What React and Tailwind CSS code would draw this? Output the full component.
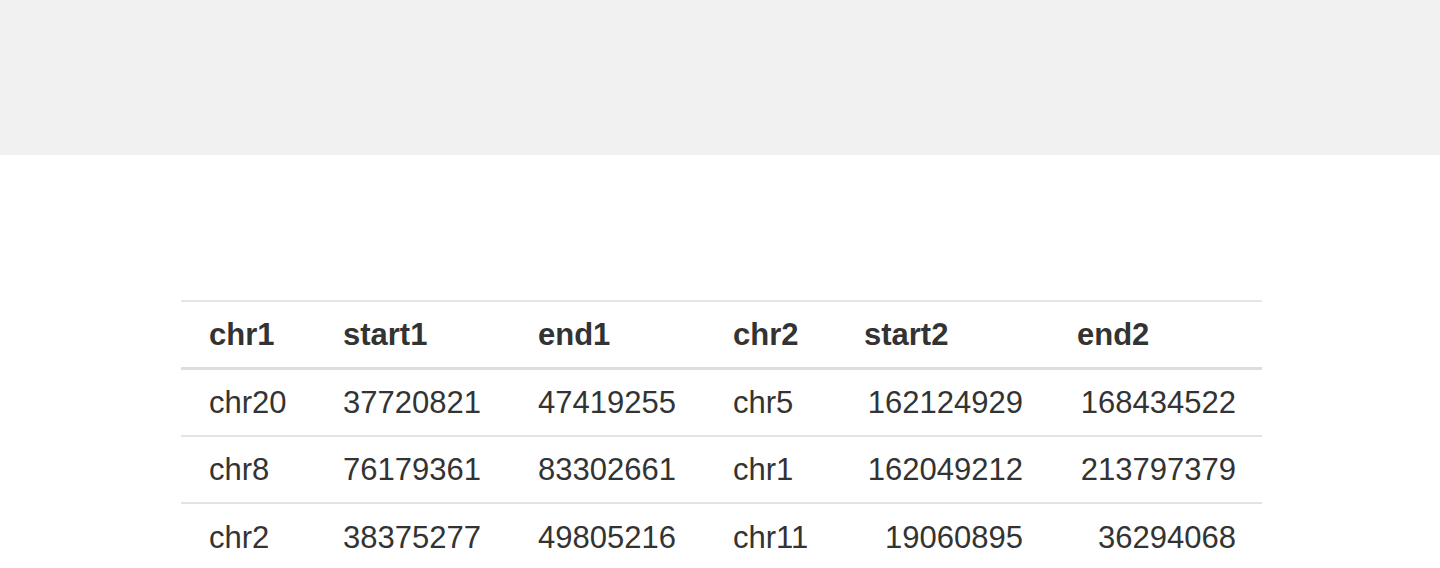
const columns = [
  { key: "chr1", label: "chr1", width: "w-[134px]", align: "text-left" },
  { key: "start1", label: "start1", width: "w-[195px]", align: "text-left" },
  { key: "end1", label: "end1", width: "w-[195px]", align: "text-left" },
  { key: "chr2", label: "chr2", width: "w-[131px]", align: "text-left" },
  { key: "start2", label: "start2", width: "w-[213px]", align: "text-right" },
  { key: "end2", label: "end2", width: "w-[213px]", align: "text-right" },
];

const rows = [
  { chr1: "chr20", start1: "37720821", end1: "47419255", chr2: "chr5", start2: "162124929", end2: "168434522" },
  { chr1: "chr8", start1: "76179361", end1: "83302661", chr2: "chr1", start2: "162049212", end2: "213797379" },
  { chr1: "chr2", start1: "38375277", end1: "49805216", chr2: "chr11", start2: "19060895", end2: "36294068" },
];

function App() {
  return (
    <div className="min-h-[568px] bg-white font-['Liberation_Sans',Arial,sans-serif] text-[#333333]">
      <header className="h-[155px] bg-[#f1f1f1]" />

      <main className="flex justify-center pt-[145px] pl-[3px]">
        <table className="w-[1081px] table-fixed border-collapse border-t-2 border-[#e6e6e6] text-[31px] leading-none">
          <thead>
            <tr className="h-[67px] border-b-[3px] border-[#dedede]">
              {columns.map((col) => (
                <th
                  key={col.key}
                  className={`${col.width} pt-[1px] pl-[28px] pr-[27px] text-left font-bold`}
                >
                  {col.label}
                </th>
              ))}
            </tr>
          </thead>
          <tbody>
            {rows.map((row, i) => (
              <tr key={i} className="h-[67.5px] border-b-2 border-[#e3e3e3]">
                {columns.map((col) => (
                  <td
                    key={col.key}
                    className={`pt-[1px] pl-[28px] font-normal ${col.align} ${col.align === "text-right" ? "pr-[26px]" : "pr-[27px]"}`}
                  >
                    {row[col.key]}
                  </td>
                ))}
              </tr>
            ))}
          </tbody>
        </table>
      </main>
    </div>
  );
}

export default App;
